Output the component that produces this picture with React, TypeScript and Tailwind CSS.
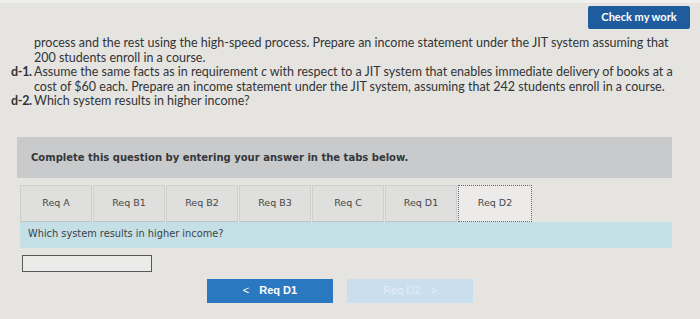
export default function App() {
  const tabs = ["Req A", "Req B1", "Req B2", "Req B3", "Req C", "Req D1", "Req D2"];

  return (
    <div className="w-[700px] h-[319px] overflow-hidden bg-[#e5e4e1] text-[#2e2f31] relative">
      <div className="h-[3px] bg-[#efefed]" />
      {/* top action */}
      <div className="flex justify-end pr-[10px] pt-[3px]">
        <button className="w-[102px] h-[23px] rounded-[2px] bg-[#1e5c9e] text-white text-[11px] font-bold font-['Lato',sans-serif]">
          Check my work
        </button>
      </div>

      {/* question text */}
      <div className="mt-[7px] pl-[11px] pr-[14px] text-[12.5px] leading-[14.5px] font-['Lato',sans-serif] text-[#333436]">
        <p className="pl-[23px]">
          process and the rest using the high-speed process. Prepare an income statement under the JIT system assuming that
          <br />
          200 students enroll in a course.
        </p>
        <p className="flex">
          <span className="font-bold w-[23px] shrink-0 whitespace-nowrap tracking-[-0.3px]">d-1.</span>
          <span>
            Assume the same facts as in requirement <i>c</i> with respect to a JIT system that enables immediate delivery of books at a
            <br />
            cost of $60 each. Prepare an income statement under the JIT system, assuming that 242 students enroll in a course.
          </span>
        </p>
        <p className="flex">
          <span className="font-bold w-[23px] shrink-0 whitespace-nowrap tracking-[-0.3px]">d-2.</span>
          <span>Which system results in higher income?</span>
        </p>
      </div>

      {/* instructions panel */}
      <div className="mt-[28px] ml-[17px] w-[655px] h-[41px] bg-[#c8cacb] flex items-center pl-[14px] font-['DejaVu_Sans',sans-serif] text-[10px] font-bold text-[#34373b]">
        Complete this question by entering your answer in the tabs below.
      </div>

      {/* tabs */}
      <div className="mt-[7px] ml-[20px] flex font-['DejaVu_Sans',sans-serif] text-[9.5px] text-[#45484b]">
        {tabs.map((t, i) =>
          i === tabs.length - 1 ? (
            <div
              key={t}
              className="w-[74px] h-[37px] flex items-center justify-center bg-[#ecebea] border border-dotted border-[#5a6c78]"
            >
              {t}
            </div>
          ) : (
            <div
              key={t}
              className="w-[72px] h-[37px] mr-[1px] flex items-center justify-center bg-[#dfdfdd] border border-[#cfcfcd] border-b-[#bfc3c5]"
            >
              {t}
            </div>
          )
        )}
      </div>

      {/* question bar */}
      <div className="ml-[20px] w-[652px] h-[26px] bg-[#c4dfe6] flex items-center pl-[8px] font-['DejaVu_Sans',sans-serif] text-[9.8px] text-[#3d4144]">
        Which system results in higher income?
      </div>

      {/* answer input */}
      <div className="mt-[7px] ml-[22px] w-[130px] h-[17px] border border-[#55595c] bg-[#ebebea]" />

      {/* nav buttons */}
      <div className="mt-[7px] ml-[207px] flex gap-[14px] font-['Liberation_Sans',sans-serif] text-[11px] font-bold">
        <button className="w-[126px] h-[24px] bg-[#2a78c0] text-white flex items-center justify-center gap-[10px]">
          <span className="font-normal">&lt;</span>
          <span>Req D1</span>
        </button>
        <button className="w-[126px] h-[24px] bg-[#c9dfee] text-[#e3eef7] flex items-center justify-center gap-[10px]">
          <span className="font-normal">Req D2</span>
          <span className="font-normal">&gt;</span>
        </button>
      </div>
    </div>
  );
}
